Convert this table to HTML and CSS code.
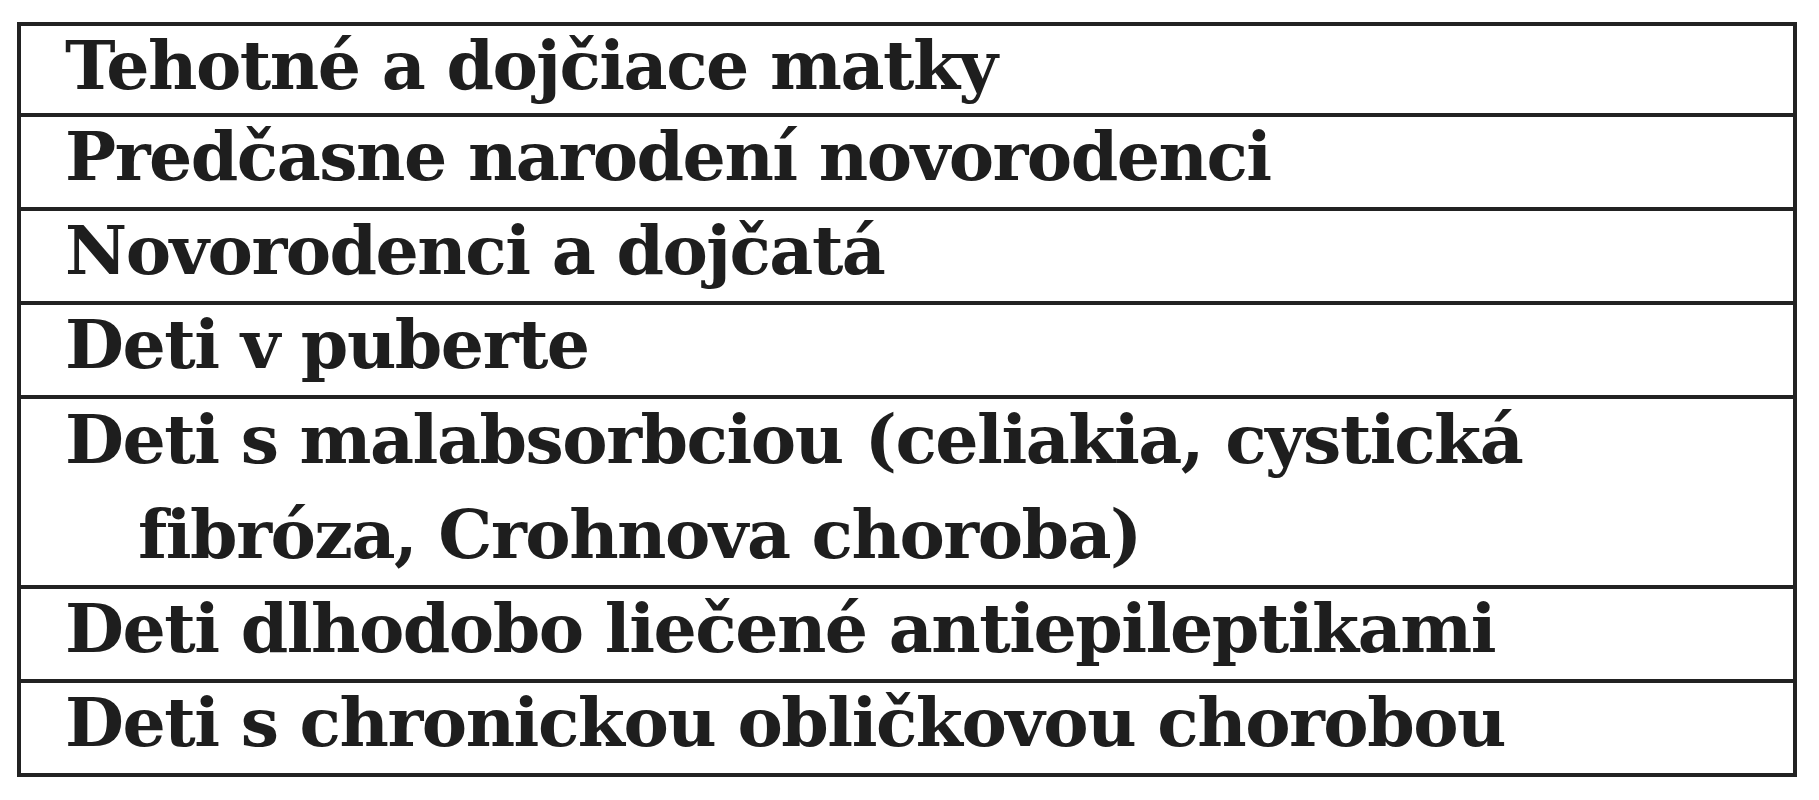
FILE: index.html
```html
<!DOCTYPE html>
<html lang="sk">
<head>
<meta charset="utf-8">
<title>Rizikové skupiny</title>
<link rel="stylesheet" href="styles.css">
</head>
<body>
<div class="box">
  <div class="row first"><span class="txt">Tehotné a dojčiace matky</span></div>
  <div class="row"><span class="txt">Predčasne narodení novorodenci</span></div>
  <div class="row"><span class="txt">Novorodenci a dojčatá</span></div>
  <div class="row"><span class="txt">Deti v puberte</span></div>
  <div class="row multi"><div class="txt wrap">Deti s malabsorbciou (celiakia, cystická<br>fibróza, Crohnova choroba)</div></div>
  <div class="row"><span class="txt">Deti dlhodobo liečené antiepileptikami</span></div>
  <div class="row"><span class="txt">Deti s chronickou obličkovou chorobou</span></div>
</div>
</body>
</html>
```
FILE: styles.css
```css
html, body {
  margin: 0;
  padding: 0;
  background: #ffffff;
}
body {
  width: 1819px;
  height: 800px;
  overflow: hidden;
}
.box {
  box-sizing: border-box;
  margin: 22px 0 0 17px;
  width: 1780px;
  border: 4px solid #222222;
  font-family: "DejaVu Serif", "Liberation Serif", serif;
  font-weight: bold;
  font-size: 68px;
  letter-spacing: -1.5px;
  color: #1e1e1e;
}
.row {
  border-top: 4px solid #222222;
  line-height: 79px;
  padding: 0 0 11px 44px;
  white-space: nowrap;
}
.row.first {
  border-top: 0;
  padding-bottom: 8px;
}
.row.multi {
  padding-bottom: 0;
}
.wrap {
  line-height: 95px;
  margin-top: -7px;
  padding-bottom: 3px;
  padding-left: 73px;
  text-indent: -73px;
}
```
